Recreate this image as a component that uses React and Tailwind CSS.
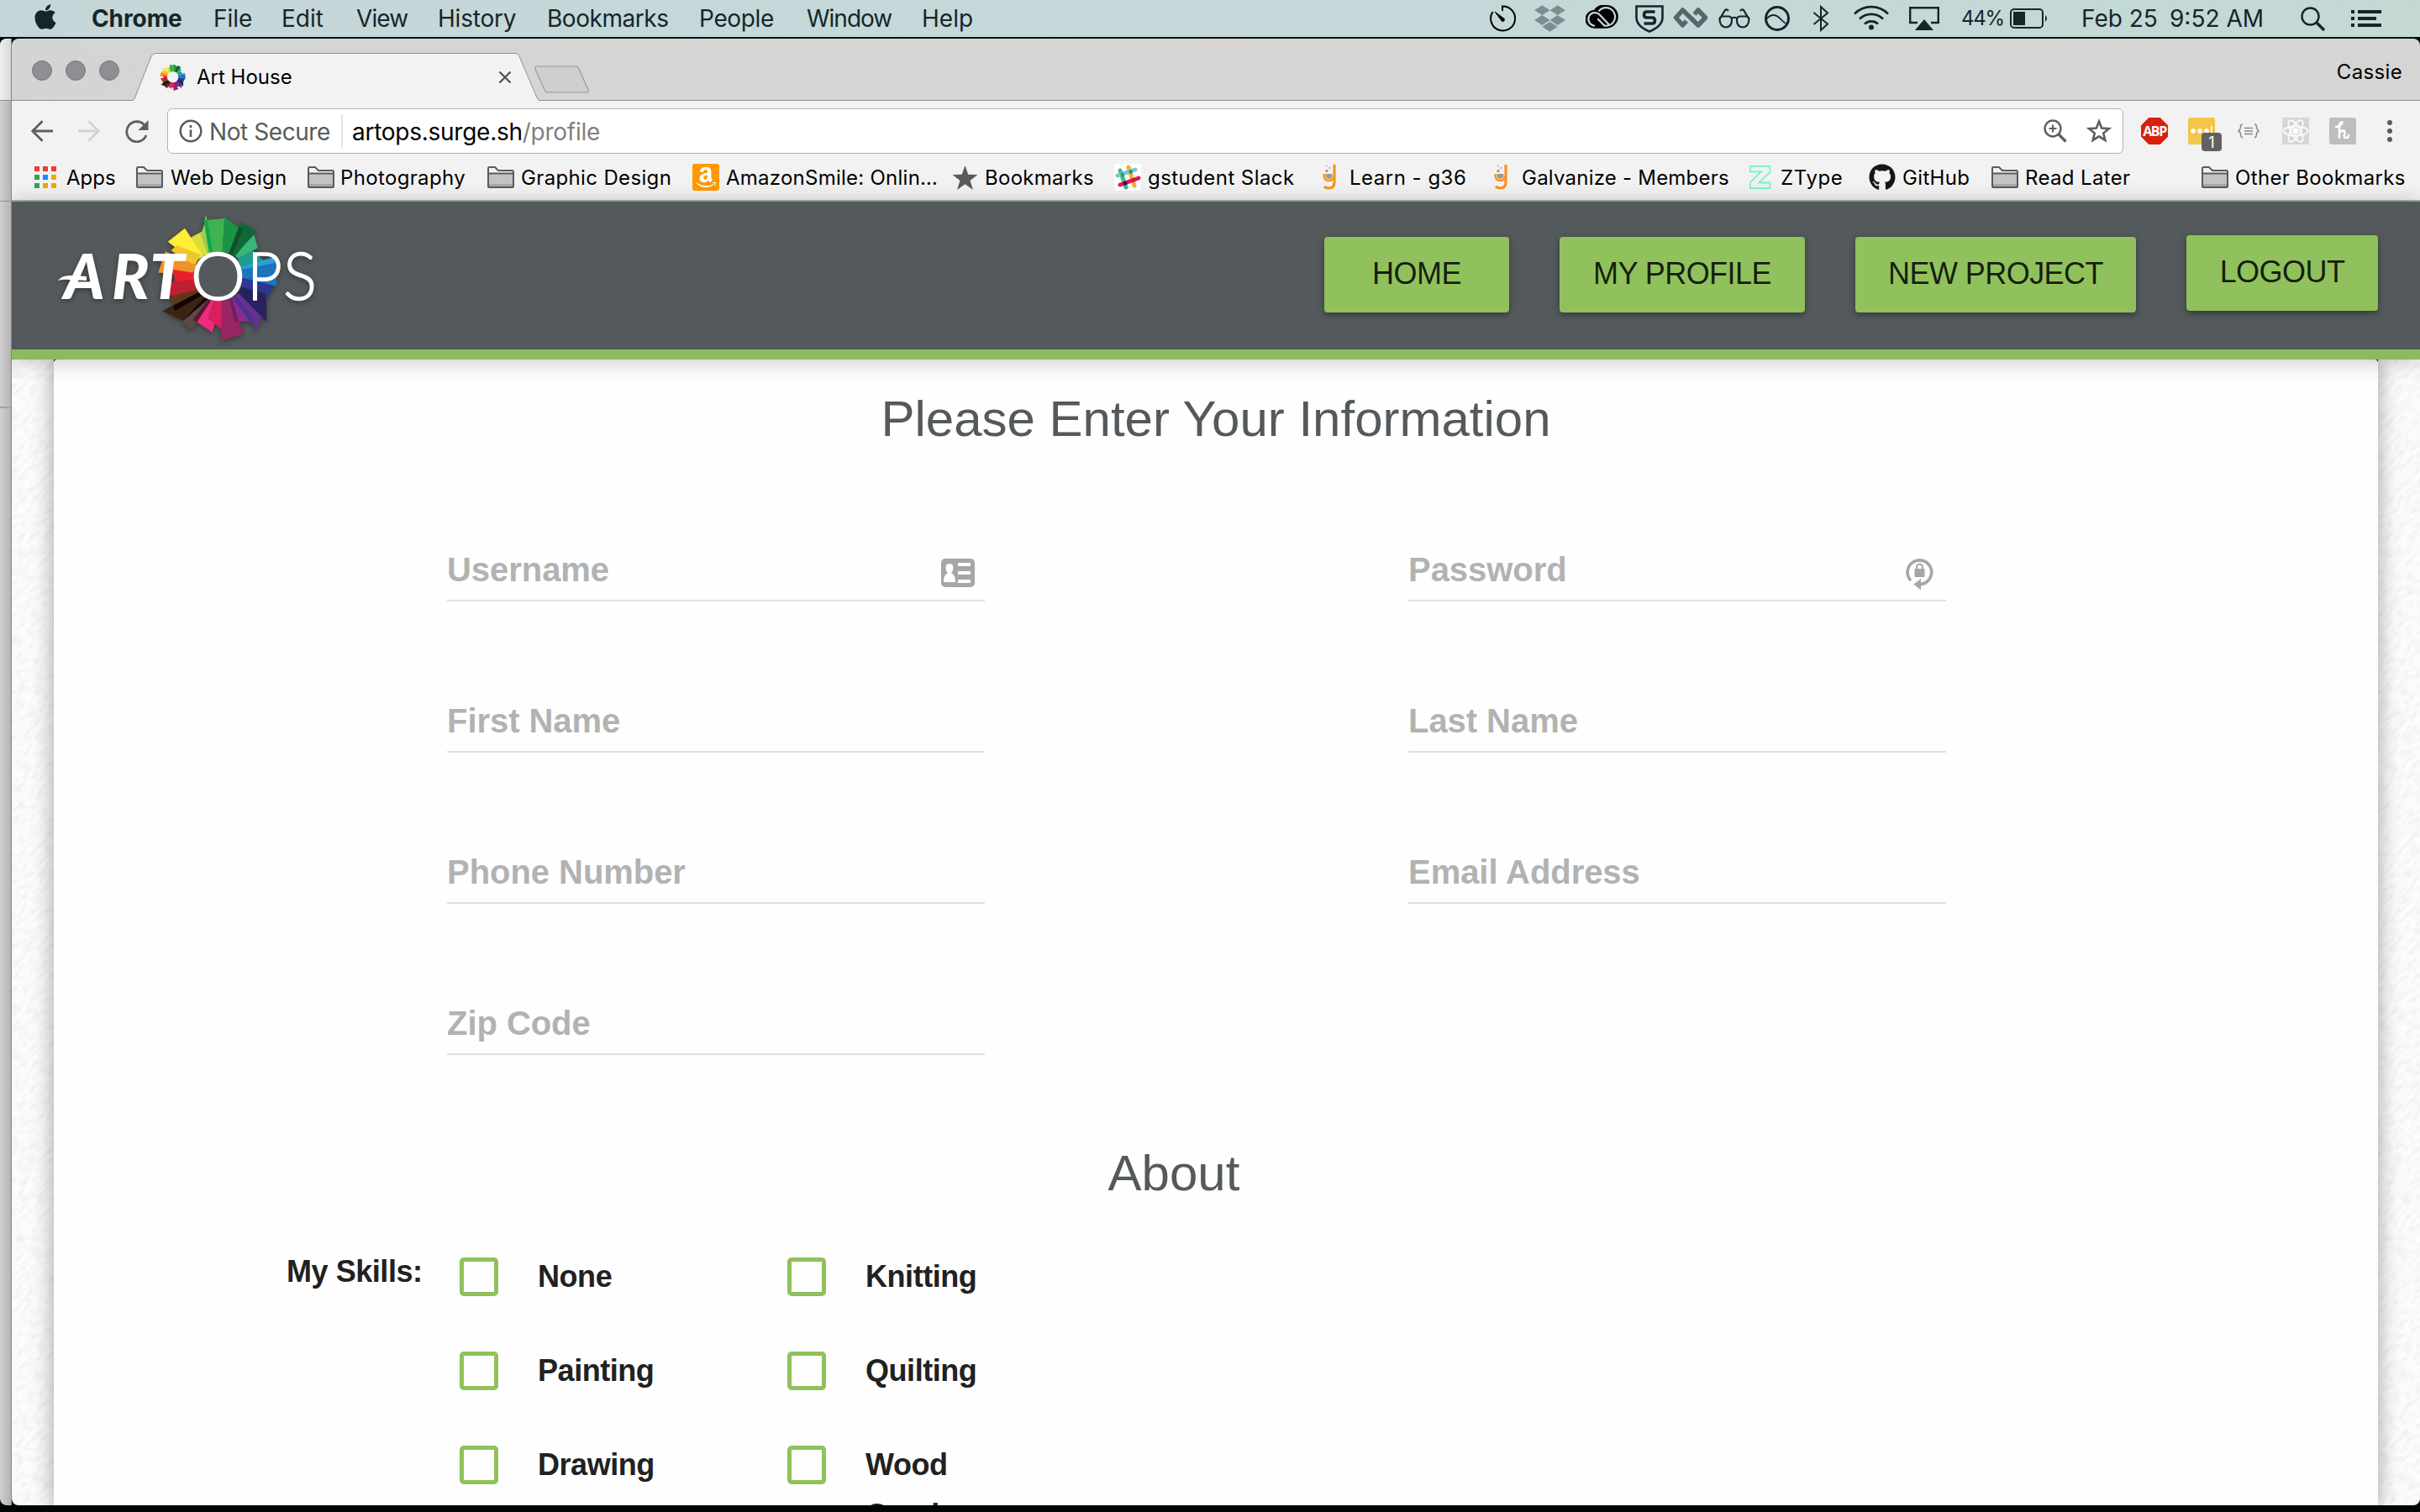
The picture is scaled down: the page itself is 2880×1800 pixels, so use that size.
import React from "react";
import { FaApple, FaDropbox, FaGithub, FaAmazon } from "react-icons/fa";

const UI = "font-['Inter',sans-serif]";
const HELV = "font-['Liberation_Sans',Arial,sans-serif]";

const RAYS = [
  ["#8bc34a", "640,78 650,120 640,215 620,150 632,130"],
  ["#d7df3c", "590,160 632,135 665,212 625,225"],
  ["#9bcb4f", "624,150 636,110 662,212 645,215"],
  ["#ffee33", "522,173 575,125 632,225 605,245"],
  ["#e8c62e", "536,203 550,187 625,220 600,270"],
  ["#f9c22f", "532,205 548,188 612,240 604,262"],
  ["#f0922c", "492,284 514,208 612,258 600,285"],
  ["#ea1f2c", "536,272 602,284 606,312 545,316"],
  ["#be2032", "500,318 604,310 612,345 530,368"],
  ["#603a17", "530,368 610,345 625,368 545,418"],
  ["#3b2412", "505,421 618,352 645,372 578,460"],
  ["#140402", "538,402 618,355 632,362 543,420"],
  ["#140402", "568,456 640,368 650,378 578,459"],
  ["#5a4842", "565,460 648,378 660,380 610,465 597,489"],
  ["#ee2a7b", "612,460 652,382 690,384 660,497"],
  ["#5c1635", "600,452 648,380 656,384 613,460"],
  ["#d91f5c", "646,448 664,386 700,386 692,488"],
  ["#9b2463", "690,385 718,380 757,502 688,527"],
  ["#8f2b8e", "716,378 742,360 790,458 742,458"],
  ["#6b2160", "714,380 722,376 742,458 730,460"],
  ["#63318f", "740,362 752,350 813,440 797,492"],
  ["#48348f", "724,374 736,366 790,455 776,458"],
  ["#27225f", "742,356 756,328 828,360 829,459"],
  ["#2b3990", "752,335 754,302 855,322 832,375 826,358"],
  ["#1b75bc", "752,268 856,250 861,332 754,302"],
  ["#2aa0da", "748,262 853,228 855,250 752,272"],
  ["#1f9c8e", "738,232 782,202 820,240 748,262"],
  ["#38b677", "728,222 790,148 802,196 740,232"],
  ["#10683a", "710,213 750,104 796,133 732,224"],
  ["#0b5229", "708,212 740,118 756,126 724,218"],
  ["#1a9347", "692,210 698,84 742,122 712,213"],
  ["#40b350", "652,211 634,97 698,90 692,209"],
  ["#12a650", "650,211 634,97 645,95 662,210"],
];

function Wheel() {
  return (
    <>
      {RAYS.map(([fill, points], i) => (
        <polygon key={i} fill={fill} points={points} />
      ))}
    </>
  );
}

function Logo() {
  return (
    <svg className="ml-[54px] mt-[14px] h-[156px] w-[310px] drop-shadow-[0_2px_3px_rgba(0,0,0,0.4)]" viewBox="68 254 310 156">
      <g transform="scale(0.38265 0.33333) translate(0 690)">
        <Wheel />
        <ellipse cx="678" cy="298" rx="72" ry="84" fill="#54595c" />
      </g>
      <g fill="#fff">
        <path d="M69 334q5-7 16-6l18 1v5l-19-1q-9-1-15 1Z" />
        <text x="76 133 178" y="356" fontFamily="Lato" fontStyle="italic" fontWeight="900" fontSize="74">ART</text>
        <g fontFamily="Lato" fontWeight="300" stroke="#fff" strokeWidth="1.300">
          <text x="226.500" y="357" fontSize="79" textLength="66" lengthAdjust="spacingAndGlyphs">O</text>
          <text x="294" y="357" fontSize="79" textLength="42" lengthAdjust="spacingAndGlyphs">P</text>
          <text x="337" y="357" fontSize="79" textLength="40" lengthAdjust="spacingAndGlyphs">S</text>
        </g>
      </g>
    </svg>
  );
}

function Favicon({ className }) {
  return (
    <svg className={className} viewBox="490 76 374 452" preserveAspectRatio="none">
      <Wheel />
      <ellipse cx="678" cy="298" rx="80" ry="92" fill="#f2f2f2" />
    </svg>
  );
}

function Folder() {
  return (
    <svg className="h-[26px] w-8 shrink-0" viewBox="0 0 32 26">
      <path d="M1 24V2.5Q1 1 2.5 1H9l4 4h16.500Q31 5 31 6.500V24q0 1-1 1H2q-1 0-1-1Z" fill="#f2f2f2" stroke="#5a5a5a" strokeWidth="2" />
      <path d="M2 9h28v15H2z" fill="#c3c3c3" />
      <path d="M2 21h28v3H2z" fill="#a9a9a9" />
      <path d="M1 8.500h30" stroke="#5a5a5a" strokeWidth="2" />
    </svg>
  );
}

function Flask() {
  return (
    <svg className="h-8 w-4 shrink-0" viewBox="0 0 16 32">
      <path d="M14 1v21q0 7-6.500 7Q4 29 2 27" fill="none" stroke="#f7941e" strokeWidth="3.200" />
      <path d="M1.800 12v2q0 6 5.700 6T13 14" fill="none" stroke="#f7941e" strokeWidth="2.600" />
      <path d="M3.500 12h8q0 6-4 6t-4-6Z" fill="#a09a8a" />
      <circle cx="5" cy="8.500" r="1.700" fill="#a09a8a" />
      <circle cx="8.500" cy="5" r="1.200" fill="#b9b4a6" />
      <circle cx="4.500" cy="2.500" r="1" fill="#b9b4a6" />
    </svg>
  );
}

function Txt({ className, children }) {
  return <span className={"shrink-0 whitespace-nowrap " + className}>{children}</span>;
}

function MenuBar() {
  return (
    <div className={UI + " flex h-[46px] shrink-0 items-center border-b-2 border-[#02080a] bg-linear-to-r from-[#c5d6d8] via-[#c4d8da] to-[#c4d8d4] text-[28px] leading-[44px] text-[#14262a]"}>
      <FaApple className="-mt-1 ml-[39px] h-[34px] w-[30px] shrink-0" />
      <Txt className="ml-[40px] w-[145px] font-bold tracking-[-0.1px]">Chrome</Txt>
      <Txt className="w-[81px]">File</Txt>
      <Txt className="w-[89px]">Edit</Txt>
      <Txt className="w-[97px] tracking-[-0.9px]">View</Txt>
      <Txt className="w-[130px] tracking-[-0.2px]">History</Txt>
      <Txt className="w-[181px] tracking-[-0.45px]">Bookmarks</Txt>
      <Txt className="w-[128px] tracking-[-0.35px]">People</Txt>
      <Txt className="w-[137px] tracking-[-1px]">Window</Txt>
      <Txt className="w-[64px]">Help</Txt>
      <div className="flex h-11 flex-1 items-center justify-end">
        <svg className="h-8 w-8" viewBox="0 0 32 32" fill="none" stroke="#000" strokeWidth="2">
          <path d="M16 7V1.500A14.500 14.500 0 1 1 4.500 8" />
          <path d="M7 8l10 7.500a2 2 0 1 1-2.500 2.500Z" fill="#000" strokeWidth="1" />
        </svg>
        <FaDropbox className="ml-[22px] h-[38px] w-[37px] text-[#7f8c90]" />
        <svg className="-mt-1 ml-[24px] h-7 w-[39px]" viewBox="0 0 115 83">
          <path d="M32 82a32 32 0 0 1-3-64A44 44 0 0 1 74 0a41 41 0 0 1 0 82Z" fill="#000" />
          <path d="M32 73a23 23 0 1 1 18-38l32 34M76 73H66L42 48M46 22a32 32 0 1 1 30 51" fill="none" stroke="#c5d6da" strokeWidth="6.500" />
        </svg>
        <svg className="ml-[20px] h-[33px] w-[34px]" viewBox="0 0 34 33" fill="none" stroke="#14262a">
          <path d="M1.500 1.500h31V15q0 10-15.500 16.500Q1.500 25 1.500 15Z" strokeWidth="2.600" />
          <path d="M23.500 8H14q-3.500 0-3.500 3.500T14 15h6q3.500 0 3.500 3.500T20 22h-9.500" strokeWidth="3.600" />
        </svg>
        <svg className="-mt-0.5 ml-[11px] h-[26px] w-[42px]" viewBox="0 0 42 26" fill="none" stroke="#56666a" strokeWidth="5.500" strokeLinejoin="round">
          <path d="M16 17l-4.500 5L3.500 13l8-9L30 22l8.500-9-8.500-9-4.500 5" />
        </svg>
        <svg className="ml-[12px] h-6 w-[38px]" viewBox="0 0 38 24" fill="none" stroke="#14262a" strokeWidth="2.200">
          <path d="M1.500 13q0-3 3-3.500h8q3.500.5 3.500 4.500 0 8-7 8.500Q2 22 1.500 13ZM36.500 13q0-3-3-3.500h-8Q22 10 22 14q0 8 7 8.500 7-.5 7.500-9.500ZM16 11.500q3-1.500 6 0M2 12L8 2q2-1.500 4 1M36 12L30 2q-2-1.500-4 1" />
        </svg>
        <svg className="ml-[16px] h-8 w-8" viewBox="0 0 32 32" fill="none" stroke="#14262a">
          <circle cx="16" cy="16" r="13.500" strokeWidth="3" />
          <path d="M3 17q4-5 8.500-5T21 17.500t7 4" strokeWidth="1.800" />
        </svg>
        <svg className="ml-[26px] h-8 w-5" viewBox="0 0 20 32" fill="none" stroke="#14262a" strokeWidth="2">
          <path d="M1.500 9L18 22.500l-8 7.500V2l8 7.500L1.500 23" />
        </svg>
        <svg className="-mt-0.5 ml-[28px] h-[30px] w-[44px]" viewBox="0 0 44 30" fill="none" stroke="#14262a" strokeWidth="2.800">
          <path d="M2 10.500a28 28 0 0 1 40 0M8 16.500a20 20 0 0 1 28 0M14 22.500a12 12 0 0 1 16 0" />
          <circle cx="22" cy="26.500" r="3" fill="#14262a" stroke="none" />
        </svg>
        <svg className="ml-[23px] h-7 w-9" viewBox="0 0 36 28">
          <path d="M10 19H1.200V1.200h33.600V19H26" fill="none" stroke="#14262a" strokeWidth="2.400" />
          <path d="M18 15l11 13H7Z" fill="#14262a" />
        </svg>
        <Txt className="ml-[26px] w-[58px] text-[24px] tracking-[-1.3px]">44%</Txt>
        <svg className="h-6 w-[46px]" viewBox="0 0 46 24">
          <rect x="1" y="1" width="38" height="22" rx="4" fill="none" stroke="#14262a" strokeWidth="2" />
          <rect x="4" y="4" width="14" height="16" fill="#14262a" />
          <path d="M42 8q4 4 0 8Z" fill="#14262a" />
        </svg>
        <Txt className="ml-[39px] w-[105px]">Feb 25</Txt>
        <Txt className="w-[109px]">9:52 AM</Txt>
        <svg className="ml-[47px] h-[29px] w-[30px]" viewBox="0 0 30 29" fill="none" stroke="#14262a">
          <circle cx="11.500" cy="11.500" r="10" strokeWidth="2.400" />
          <path d="M18.500 18.500l9.500 9.500" strokeWidth="3.400" />
        </svg>
        <svg className="ml-[30px] mr-[46px] h-5 w-9" viewBox="0 0 36 20" fill="#14262a">
          <path d="M0 0h4v4H0zM0 8h4v4H0zM0 16h4v4H0zM8 0h28v4H8zM8 8h22v4H8zM8 16h28v4H8z" />
        </svg>
      </div>
    </div>
  );
}

function TabStrip() {
  return (
    <div className="flex h-[74px] shrink-0 bg-linear-to-r from-[#d3d5d4] via-[#d6d5d3] to-[#d4d5d4] shadow-[inset_0_-1px_0_#8f8f8f]">
      <div className="ml-[24px] flex gap-4 pt-[26px]">
        <span className="size-6 rounded-full border border-[#77777c] bg-[#8e8e93]" />
        <span className="size-6 rounded-full border border-[#77777c] bg-[#8e8e93]" />
        <span className="size-6 rounded-full border border-[#77777c] bg-[#8e8e93]" />
      </div>
      <div className="relative ml-[16px] mt-[17px] h-[57px] w-[484px]">
        <svg className="absolute inset-0 h-[57px] w-[484px]" viewBox="0 0 484 57">
          <path d="M0 57V56.500Q2 56 3.500 51L22 4q1.500-3.500 5-3.500H455q4 0 5 3.500L480 51q2 5 4 5.500V57Z" fill="#f2f2f2" />
          <path d="M0 56.500Q2 56 3.500 51L22 4q1.500-3.500 5-3.500H455q4 0 5 3.500L480 51q2 5 4 5.500" fill="none" stroke="#8f8f8f" />
        </svg>
        <div className="relative flex h-[57px] items-center">
          <Favicon className="ml-8 h-8 w-[31px]" />
          <span className={UI + " ml-[13px] flex-1 text-[24px] text-black"}>Art House</span>
          <svg className="mr-[33px] size-4" viewBox="0 0 16 16" stroke="#505050" strokeWidth="2.200"><path d="M1.500 1.500l13 13M14.500 1.500l-13 13" /></svg>
        </div>
      </div>
      <svg className="-ml-[7px] mt-[32px] h-[34px] w-[68px]" viewBox="0 0 68 34">
        <path d="M4 1H50q3 0 4 3L65 29q1 3-2 3H18q-4 0-5-3L2 4Q1 1 4 1Z" fill="#cfcfce" stroke="#9a9a9a" strokeWidth="1.200" />
      </svg>
      <span className={UI + " ml-auto mr-[21px] pt-[22px] text-[24px] leading-9 tracking-[0.35px] text-black"}>Cassie</span>
    </div>
  );
}

function Toolbar() {
  return (
    <div className="flex h-[64px] shrink-0 items-center bg-[#f2f2f2] pt-[8px]">
      <svg className="ml-[23px] h-[26px] w-[26px]" viewBox="0 0 26 26" fill="none" stroke="#5f5f5f" strokeWidth="2.800"><path d="M26 13H2M13.500 1.200L1.700 13l11.800 11.800" /></svg>
      <svg className="ml-[30px] h-[26px] w-[26px]" viewBox="0 0 26 26" fill="none" stroke="#d3d3d3" strokeWidth="2.800"><path d="M0 13h24M12.500 1.200L24.300 13 12.500 24.800" /></svg>
      <svg className="ml-[30px] h-[27px] w-[28px]" viewBox="0 0 28 27"><path d="M22.500 5.500A12 12 0 1 0 25 18" fill="none" stroke="#5f5f5f" strokeWidth="2.800" /><path d="M27.500 0v12H15.500Z" fill="#5f5f5f" /></svg>
      <div className="ml-[22px] flex h-[54px] w-[2328px] shrink-0 items-center rounded-md border border-[#b2b2b2] bg-white">
        <svg className="ml-[13px] size-7 shrink-0" viewBox="0 0 28 28" fill="none" stroke="#5a5a5a"><circle cx="14" cy="14" r="12.300" strokeWidth="2.500" /><path d="M14 12.500V21M14 7v3" strokeWidth="2.600" /></svg>
        <Txt className={UI + " ml-[8px] w-[157px] pt-0.5 text-[28px] tracking-[-0.43px] text-[#5a5a5a]"}>Not Secure</Txt>
        <span className="h-10 w-0.5 bg-[#e5e5e5]" />
        <Txt className={UI + " ml-[11px] pt-0.5 text-[28px] tracking-[-0.26px] text-black"}>artops.surge.sh<span className="text-[#808080]">/profile</span></Txt>
        <svg className="ml-auto h-[28px] w-[28px]" viewBox="0 0 28 28" fill="none" stroke="#5f5f5f"><circle cx="11" cy="11" r="9.500" strokeWidth="2.400" /><path d="M11 6.500v9M6.500 11h9" strokeWidth="2" /><path d="M17.500 17.500l9 9" strokeWidth="3.400" /></svg>
        <svg className="-mt-0.5 ml-[23px] mr-[13px] h-[29px] w-[30px]" viewBox="0 0 30 29"><path d="M15 3.500l3.200 8 8.600.6-6.600 5.500 2.100 8.300-7.300-4.600-7.300 4.600 2.100-8.300-6.600-5.500 8.600-.6Z" fill="none" stroke="#5f5f5f" strokeWidth="2.600" /></svg>
      </div>
      <div className="ml-[21px] flex size-8 items-center justify-center bg-[#d9200f] [clip-path:polygon(29%_0,71%_0,100%_29%,100%_71%,71%_100%,29%_100%,0_71%,0_29%)]">
        <span className="font-['Open_Sans',sans-serif] text-[16px] font-bold tracking-[-1.4px] text-white">ABP</span>
      </div>
      <div className="relative ml-[24px] h-8 w-8 rounded-[3px] bg-[#f3c649]">
        <svg className="absolute left-0.5 top-2.5 h-3 w-7" viewBox="0 0 28 12" fill="#fff"><circle cx="4" cy="6" r="2.800" /><circle cx="12" cy="6" r="2.800" /><circle cx="20" cy="6" r="2.800" /><path d="M25 0h1.500v12H25z" /></svg>
        <span className={UI + " absolute left-4 top-[18px] flex h-[22px] w-6 items-center justify-center rounded-sm bg-[#616161] text-[18px] text-white"}>1</span>
      </div>
      <svg className="ml-[27px] h-[18px] w-[26px]" viewBox="0 0 26 18" fill="none" stroke="#8a8a8a" strokeWidth="1.500"><path d="M6 1Q3.500 1 3.500 4T1 9q2.500 1 2.500 4T6 17M20 1q2.500 0 2.500 3T25 9q-2.500 1-2.500 4T20 17M8 5.500h10M8 9h10M8 12.500h10" /></svg>
      <svg className="ml-[27px] size-8 bg-[#d6d6d6]" viewBox="0 0 32 32" fill="none" stroke="#fff" strokeWidth="1.600"><ellipse cx="16" cy="16" rx="14.500" ry="5.500" /><ellipse cx="16" cy="16" rx="14.500" ry="5.500" transform="rotate(60 16 16)" /><ellipse cx="16" cy="16" rx="14.500" ry="5.500" transform="rotate(120 16 16)" /><circle cx="16" cy="16" r="2.600" fill="#fff" /></svg>
      <svg className="ml-[24px] size-8 rounded-[3px] bg-[#bcbec0]" viewBox="0 0 32 32" fill="none" stroke="#fff" strokeWidth="2.600" strokeLinecap="round"><path d="M8 11q4 0 7-4 1-2-.5-1.500-2.500 1-2.500 6V24M12 18q4-4 6-2 1 1 0 4.500t2 3.500 3-3" /></svg>
      <svg className="ml-[36px] h-[26px] w-2" viewBox="0 0 8 26" fill="#5a5a5a"><circle cx="4" cy="3" r="3" /><circle cx="4" cy="13" r="3" /><circle cx="4" cy="23" r="3" /></svg>
    </div>
  );
}

const BM = "pt-px tracking-[0.35px] ";

function Bookmarks() {
  return (
    <div className={UI + " flex h-[56px] shrink-0 items-center border-b-2 border-[#a9abac] bg-[#f2f2f2] text-[24px] text-black"}>
      <svg className="ml-[27px] size-[26px] shrink-0" viewBox="0 0 26 26">
        <path d="M0 0h6v6H0zM10 0h6v6h-6zM20 0h6v6h-6z" fill="#f4392d" />
        <path d="M0 10h6v6H0zM0 20h6v6H0z" fill="#33a056" /><path d="M10 20h6v6h-6z" fill="#f2a600" />
        <path d="M10 10h6v6h-6z" fill="#1a8cff" /><path d="M20 10h6v6h-6zM20 20h6v6h-6z" fill="#f2a600" />
      </svg>
      <Txt className="ml-[12px] w-[83px] pt-px">Apps</Txt>
      <Folder />
      <Txt className="ml-[9px] w-[163px] pt-px tracking-[0.18px]">Web Design</Txt>
      <Folder />
      <Txt className={BM + "ml-[7px] w-[175px]"}>Photography</Txt>
      <Folder />
      <Txt className={BM + "ml-[8px] w-[204px]"}>Graphic Design</Txt>
      <span className="flex size-8 shrink-0 items-center justify-center rounded-[3px] bg-[#ff9900]"><FaAmazon className="size-7 text-white" /></span>
      <Txt className="ml-[8px] w-[269px] pt-px tracking-[0.25px]">AmazonSmile: Onlin…</Txt>
      <svg className="h-[29px] w-[31px] shrink-0" viewBox="0 0 31 29"><path d="M15.500 0l3.800 10.700L30.500 11l-9 7 3.500 11-9.500-6.700L6 29l3.500-11-9-7 11.200-.3Z" fill="#5a5a5a" /></svg>
      <Txt className="ml-[8px] w-[154px] pt-px tracking-[0.28px]">Bookmarks</Txt>
      <svg className="size-8 shrink-0 rounded-[3px] bg-white" viewBox="0 0 32 32" strokeWidth="5" strokeLinecap="round">
        <path d="M17 4l7 22" stroke="#ecb12f" /><path d="M7 8l7 20" stroke="#3eb991" /><path d="M4 14l21-7" stroke="#70cadb" /><path d="M7 25l22-8" stroke="#e01765" />
        <path d="M9.500 12.500l.5 1M19.500 9l.5 1" stroke="#3f8e5a" strokeWidth="4" /><path d="M13 23l.2.300" stroke="#361238" strokeWidth="4.500" /><path d="M23 19.200l.2.200" stroke="#cc2027" strokeWidth="4.500" />
      </svg>
      <Txt className="ml-[8px] w-[208px] pt-px tracking-[0.44px]">gstudent Slack</Txt>
      <Flask />
      <Txt className="ml-[16px] w-[172px] pt-px tracking-[0.5px]">Learn - g36</Txt>
      <Flask />
      <Txt className="ml-[17px] w-[270px] pt-px tracking-[0.22px]">Galvanize - Members</Txt>
      <svg className="h-[30px] w-[28px] shrink-0" viewBox="0 0 28 30" fill="none" stroke="#7ff0d0" strokeWidth="1.800"><path d="M2 2h23.500v7L12 21.500h13.500V28H2v-7L15 8.500H2Z" /></svg>
      <Txt className="ml-[10px] w-[105px] pt-px tracking-[0.65px]">ZType</Txt>
      <FaGithub className="size-8 shrink-0 text-[#171515]" />
      <Txt className={BM + "ml-[8px] w-[106px]"}>GitHub</Txt>
      <Folder />
      <Txt className={BM + "ml-[8px] w-[210px]"}>Read Later</Txt>
      <Folder />
      <Txt className={BM + "ml-[8px]"}>Other Bookmarks</Txt>
    </div>
  );
}

const BTN = "flex h-[90px] items-center justify-center rounded-[4px] bg-[#90c15c] pb-[3px] text-[36px] tracking-[-0.55px] text-black/85 shadow-[0_4px_4px_rgba(0,0,0,0.14),0_2px_10px_rgba(0,0,0,0.24)] ";

function SiteHeader() {
  return (
    <header className={HELV + " relative z-10 flex h-[188px] shrink-0 items-start border-b-[12px] border-[#8cbb5c] bg-[#54595c] shadow-[0_2px_24px_rgba(0,0,0,0.24)]"}>
      <Logo />
      <nav className="ml-auto mr-[50px] mt-[40px] flex items-start gap-[60px]">
        <button className={BTN + "mt-0.5 w-[220px]"}>HOME</button>
        <button className={BTN + "mt-0.5 w-[292px]"}>MY PROFILE</button>
        <button className={BTN + "mt-0.5 w-[334px]"}>NEW PROJECT</button>
        <button className={BTN + "w-[228px]"}>LOGOUT</button>
      </nav>
    </header>
  );
}

function Field({ label, icon }) {
  return (
    <div className="flex h-[76px] items-center border-b-2 border-[#dfdfdf] pt-[2px] text-[40px] leading-[48px] font-bold tracking-[-0.05px] text-[#b2b2b2]">
      <span className="flex-1">{label}</span>
      {icon}
    </div>
  );
}

function Check({ label }) {
  return (
    <div className="flex h-[46px] items-start">
      <span className="-ml-px size-[46px] shrink-0 rounded-[5px] border-[5px] border-[#90c15c]" />
      <span className="-mt-[7px] ml-[47px] w-[150px] leading-[60px]">{label}</span>
    </div>
  );
}

function IdIcon() {
  return (
    <svg className="mr-[12px] mt-[8px] h-[34px] w-[40px]" viewBox="0 0 40 34">
      <rect width="40" height="34" rx="5" fill="#a6a6a6" />
      <path d="M20 7h15M20 17h15M20 27h15" stroke="#fff" strokeWidth="4" />
      <path d="M10 6q4.500 0 4.500 5 0 4-2.500 6 5 2 5 11H3q0-9 5-11-2.500-2-2.500-6 0-5 4.500-5Z" fill="#fff" />
    </svg>
  );
}

function LockIcon() {
  return (
    <svg className="mr-[15px] mt-[8px] h-[41px] w-[33px]" viewBox="0 0 33 41">
      <path d="M6 29A14.300 14.300 0 1 1 17 33.500" fill="none" stroke="#a6a6a6" strokeWidth="3.600" />
      <path d="M9.500 33.500L18 27v13.500Z" fill="#a6a6a6" />
      <rect x="10.500" y="15" width="12" height="10" rx="1" fill="#a6a6a6" />
      <path d="M13 16v-3a3.500 3.500 0 0 1 7 0v3" fill="none" stroke="#a6a6a6" strokeWidth="2" />
    </svg>
  );
}

function Paper() {
  return (
    <svg className="h-full w-[50px] shrink-0 bg-[#fcfcfc]">
      <filter id="paper" x="0" y="0" width="100%" height="100%">
        <feTurbulence type="fractalNoise" baseFrequency="0.08 0.2" numOctaves="2" seed="4" />
        <feColorMatrix values="0 0 0 0 0.55  0 0 0 0 0.55  0 0 0 0 0.55  0.5 0 0 0 -0.2" />
      </filter>
      <g transform="rotate(-45)">
        <rect x="-1400" y="-60" width="1500" height="1500" filter="url(#paper)" />
      </g>
    </svg>
  );
}

function ProfilePage() {
  return (
    <div className={HELV + " flex h-[1364px] shrink-0 overflow-hidden"}>
      <Paper />
      <main className="relative w-[2766px] shrink-0 rounded-t-[4px] bg-[#fefefe] shadow-[0_0_24px_2px_rgba(0,0,0,0.32)]">
        <h1 className="mt-[38px] text-center text-[60px] leading-[66px] text-[#54595c]">Please Enter Your Information</h1>
        <div className="ml-[468px] mt-[108px] grid w-[1784px] grid-cols-[640px_640px] gap-x-[504px] gap-y-[104px]">
          <Field label="Username" icon={<IdIcon />} />
          <Field label="Password" icon={<LockIcon />} />
          <Field label="First Name" />
          <Field label="Last Name" />
          <Field label="Phone Number" />
          <Field label="Email Address" />
          <Field label="Zip Code" />
        </div>
        <h2 className="mt-[108px] pr-[100px] text-center text-[60px] leading-[66px] text-[#54595c]">About</h2>
        <div className="ml-[275px] mt-[61px] flex text-[36px] font-bold tracking-[-0.45px] text-[#212121]">
          <span className="w-[209px] pl-0.5 leading-[46px]">My Skills:</span>
          <div className="grid grid-cols-[390px_390px] gap-y-[66px] pt-[6px]">
            <Check label="None" />
            <Check label="Knitting" />
            <Check label="Painting" />
            <Check label="Quilting" />
            <Check label="Drawing" />
            <Check label="Wood Carving" />
          </div>
        </div>
      </main>
      <Paper />
    </div>
  );
}

export default function App() {
  return (
    <div className="flex h-[1800px] w-[2880px] flex-col overflow-hidden bg-[#020505]">
      <MenuBar />
      <div className="flex h-[1746px] shrink-0">
        <div className="flex w-[14px] shrink-0 flex-col overflow-hidden rounded-tl-lg rounded-bl-lg border-r border-[#858585] bg-linear-to-r from-[#d0d0d0] to-[#b4b4b4]">
          <div className="h-[74px] shrink-0 border-b border-[#8f8f8f] bg-linear-to-r from-[#f0f0f0] to-[#d8d8d8]" />
          <div className="h-[120px] shrink-0 border-b border-[#8f8f8f]" />
          <div className="h-[246px] shrink-0 border-b-2 border-[#a5a5a5]" />
        </div>
        <div className="flex w-[2866px] shrink-0 flex-col overflow-hidden rounded-lg">
          <TabStrip />
          <Toolbar />
          <Bookmarks />
          <SiteHeader />
          <ProfilePage />
        </div>
      </div>
    </div>
  );
}
